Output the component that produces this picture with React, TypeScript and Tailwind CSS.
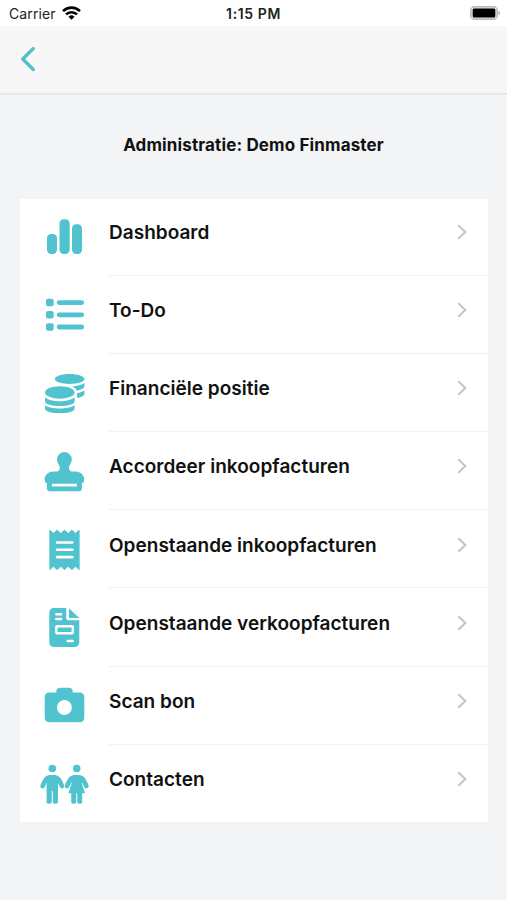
import React from "react";
import { FaCoins } from "react-icons/fa";

const BarsIcon = () => (
  <svg viewBox="0 0 50 50" className="size-[50px] fill-current">
    <rect x="7" y="22" width="10" height="20" rx="4.2" />
    <rect x="19.5" y="7.3" width="10.2" height="34.7" rx="4.2" />
    <rect x="32" y="12.3" width="10" height="29.7" rx="4.2" />
  </svg>
);

const ListIcon = () => (
  <svg viewBox="0 0 50 50" className="size-[50px] fill-current">
    <rect x="6" y="8.8" width="7.7" height="7.5" rx="2" />
    <rect x="6" y="21" width="7.7" height="7.5" rx="2" />
    <rect x="6" y="33.2" width="7.7" height="7.5" rx="2" />
    <rect x="16.7" y="10.2" width="27.4" height="4.8" rx="2.4" />
    <rect x="16.7" y="22.4" width="27.4" height="4.8" rx="2.4" />
    <rect x="16.7" y="34.6" width="27.4" height="4.8" rx="2.4" />
  </svg>
);

const CoinsIcon = () => (
  <div className="flex size-[50px] items-center justify-center">
    <FaCoins className="size-[39.5px]" />
  </div>
);

const StampIcon = () => (
  <svg viewBox="0 0 50 50" className="size-[50px] fill-current">
    <path
      fillRule="evenodd"
      d="M24.4 5.100a7.400 7.400 0 0 1 7.400 7.400c0 4-2.800 5-2.800 8.300c0 2.200 1 3.600 3.200 3.700h3.300c5.500.3 8.700 3.800 8.700 7.800c0 2.200-.8 3.500-2.300 3.900v5.100c0 2-1.200 3-3 3h-29c-1.800 0-3-1-3-3v-5.100c-1.500-.4-2.300-1.700-2.300-3.900c0-4 3.200-7.500 8.700-7.800h3.300c2.200-.1 3.200-1.500 3.200-3.700c0-3.300-2.800-4.300-2.800-8.300a7.400 7.400 0 0 1 7.400-7.400zM11.900 36.700v2.900h25v-2.900z"
    />
  </svg>
);

const ReceiptIcon = () => (
  <svg viewBox="0 0 50 50" className="size-[50px] fill-current">
    <path
      stroke="currentColor"
      strokeLinejoin="round"
      d="M9.900 5.200l3.500 3.300l3.700-3.300l3.700 3.300l3.700-3.300l3.700 3.300l3.700-3.300l3.700 3.300l3.500-3.300v39.400l-3.500-3.300l-3.700 3.300l-3.700-3.300l-3.700 3.300l-3.700-3.300l-3.700 3.300l-3.700-3.300l-3.500 3.300z"
    />
    <path
      d="M17 17.500h15.300M17 24.800h15.300M17 32.100h15.300"
      stroke="white"
      strokeWidth="2.600"
      strokeLinecap="round"
    />
  </svg>
);

const InvoiceIcon = () => (
  <svg viewBox="0 0 50 50" className="size-[50px] fill-current">
    <path d="M13.800 5h12.400v9.800a2.500 2.500 0 0 0 2.500 2.500h10.600v22.200a4.500 4.500 0 0 1-4.500 4.500h-21a4.500 4.500 0 0 1-4.500-4.500v-30a4.500 4.500 0 0 1 4.500-4.500z" />
    <path d="M29 5.300l10.300 9.700h-10.300z" />
    <g fill="none" stroke="white" strokeWidth="2.500" strokeLinecap="round">
      <path d="M16.300 11.300h4.800M16.300 16h4.800M27.800 38h4.800" />
      <rect x="16.300" y="23.300" width="16.500" height="7" rx="1" />
    </g>
  </svg>
);

const CameraIcon = () => (
  <svg viewBox="0 0 50 50" className="size-[50px] fill-current">
    <path
      fillRule="evenodd"
      d="M20 6.800h9c2.300 0 3.700 1.300 3.700 3.300v1.500h7.300a4.300 4.300 0 0 1 4.300 4.300v21a4.300 4.300 0 0 1-4.300 4.300h-31a4.300 4.300 0 0 1-4.300-4.300v-21a4.300 4.300 0 0 1 4.300-4.300h7.300v-1.500c0-2 1.400-3.300 3.700-3.300zM24.400 19.100a7.400 7.400 0 1 0 .01 0z"
    />
  </svg>
);

const PeopleIcon = () => (
  <svg viewBox="0 0 50 50" className="size-[50px] fill-current">
    <circle cx="12.300" cy="8.500" r="3.800" />
    <circle cx="36.700" cy="8.500" r="3.800" />
    <g fill="none" stroke="currentColor" strokeWidth="4.600" strokeLinecap="round">
      <path d="M9.500 17.200c-3.500.3-4.500 3.500-6.900 8.900M15.100 17.200c3.500.3 4.500 3.500 6.900 8.900" />
      <path d="M33.900 17.200c-3.500.3-4.500 3.500-6.900 8.900M39.500 17.200c3.500.3 4.500 3.500 6.900 8.900" />
    </g>
    <path d="M9.500 14.900h5.600l2.900 3v24c0 2.600-5.200 2.600-5.200 0v-11h-1v11c0 2.600-5.200 2.600-5.200 0v-24z" />
    <path d="M33.900 14.900h5.600l2.400 3v5.500l3.100 9.800h-2.800v8.700c0 2.600-5 2.600-5 0v-8.700h-1v8.700c0 2.600-5 2.600-5 0v-8.700h-2.800l3.100-9.800v-5.500z" />
  </svg>
);

const items = [
  { label: "Dashboard", icon: BarsIcon },
  { label: "To-Do", icon: ListIcon },
  { label: "Financiële positie", icon: CoinsIcon },
  { label: "Accordeer inkoopfacturen", icon: StampIcon },
  { label: "Openstaande inkoopfacturen", icon: ReceiptIcon },
  { label: "Openstaande verkoopfacturen", icon: InvoiceIcon },
  { label: "Scan bon", icon: CameraIcon },
  { label: "Contacten", icon: PeopleIcon },
];

const StatusBar = () => (
  <div className="grid h-[26px] grid-cols-3 items-center bg-white px-[9px] pt-[2px] text-[14px] leading-none text-[#222]">
    <div className="flex items-center gap-[6px]">
      <span className="tracking-[0.100px]">Carrier</span>
      <svg viewBox="0 0 19 14" className="mb-[2px] h-[14px] w-[19px]">
        <g fill="none" stroke="black" strokeWidth="2.600">
          <path d="M1 5.100a12.200 12.200 0 0 1 17 0" />
          <path d="M4 8.400a8 8 0 0 1 11 0" />
        </g>
        <path d="M9.500 13.700l-3-3a4.300 4.300 0 0 1 6 0z" />
      </svg>
    </div>
    <span className="text-center text-[14px] font-semibold tracking-[0.600px] whitespace-nowrap">
      1:15 PM
    </span>
    <svg viewBox="0 0 31 14" className="-mr-[3px] mb-[2px] h-[14px] w-[31px] justify-self-end">
      <rect x=".8" y=".8" width="26.400" height="12.400" rx="3.800" fill="#e4e4e4" stroke="#b8b8b8" strokeWidth="1.500" />
      <rect x="2.700" y="2.500" width="22.600" height="9" rx="1.500" />
      <path d="M28.500 4.800c2.200.8 2.200 3.600 0 4.400z" fill="#b0b0b0" />
    </svg>
  </div>
);

const App = () => {
  return (
    <div className="h-[900px] w-[507px] overflow-hidden bg-[#f2f4f6] font-['Inter',sans-serif]">
      <StatusBar />
      <header className="flex h-[69px] items-center border-b-2 border-[#e9e9e9] bg-[#f7f7f7] pb-px pl-[20px]">
        <button aria-label="Terug">
          <svg viewBox="0 0 16 26" className="h-[26px] w-[16px] text-[#50bfcc]">
            <path
              d="M13.300 2.500L2.700 13l10.600 10.500"
              fill="none"
              stroke="currentColor"
              strokeWidth="3.200"
              strokeLinecap="round"
              strokeLinejoin="round"
            />
          </svg>
        </button>
      </header>
      <h1 className="mt-[38px] text-center text-[17px] leading-6 font-bold tracking-[0.130px] text-[#111]">
        Administratie: Demo Finmaster
      </h1>
      <ul className="mr-[19px] ml-[20px] mt-[42px] h-[623px] bg-white pt-px">
        {items.map(({ label, icon: Icon }) => (
          <li key={label} className="group flex h-[78.200px] pl-5 first:-mt-[2.500px]">
            <div className="mt-[14.700px] shrink-0 text-[#50c3cf]">
              <Icon />
            </div>
            <div className="ml-[19px] flex flex-1 items-start justify-between border-b border-[#f1f1f2] pt-[23.400px] pr-[21px] group-last:border-b-0">
              <span className="text-[19px] leading-6 font-semibold tracking-[0.020px] text-[#111]">
                {label}
              </span>
              <svg viewBox="0 0 10 16" className="mt-[3px] h-[16px] w-[10px]">
                <path d="M1.300 1.300L8.300 8l-7 6.700" fill="none" stroke="#c7c7c9" strokeWidth="2.200" />
              </svg>
            </div>
          </li>
        ))}
      </ul>
    </div>
  );
};

export default App;
